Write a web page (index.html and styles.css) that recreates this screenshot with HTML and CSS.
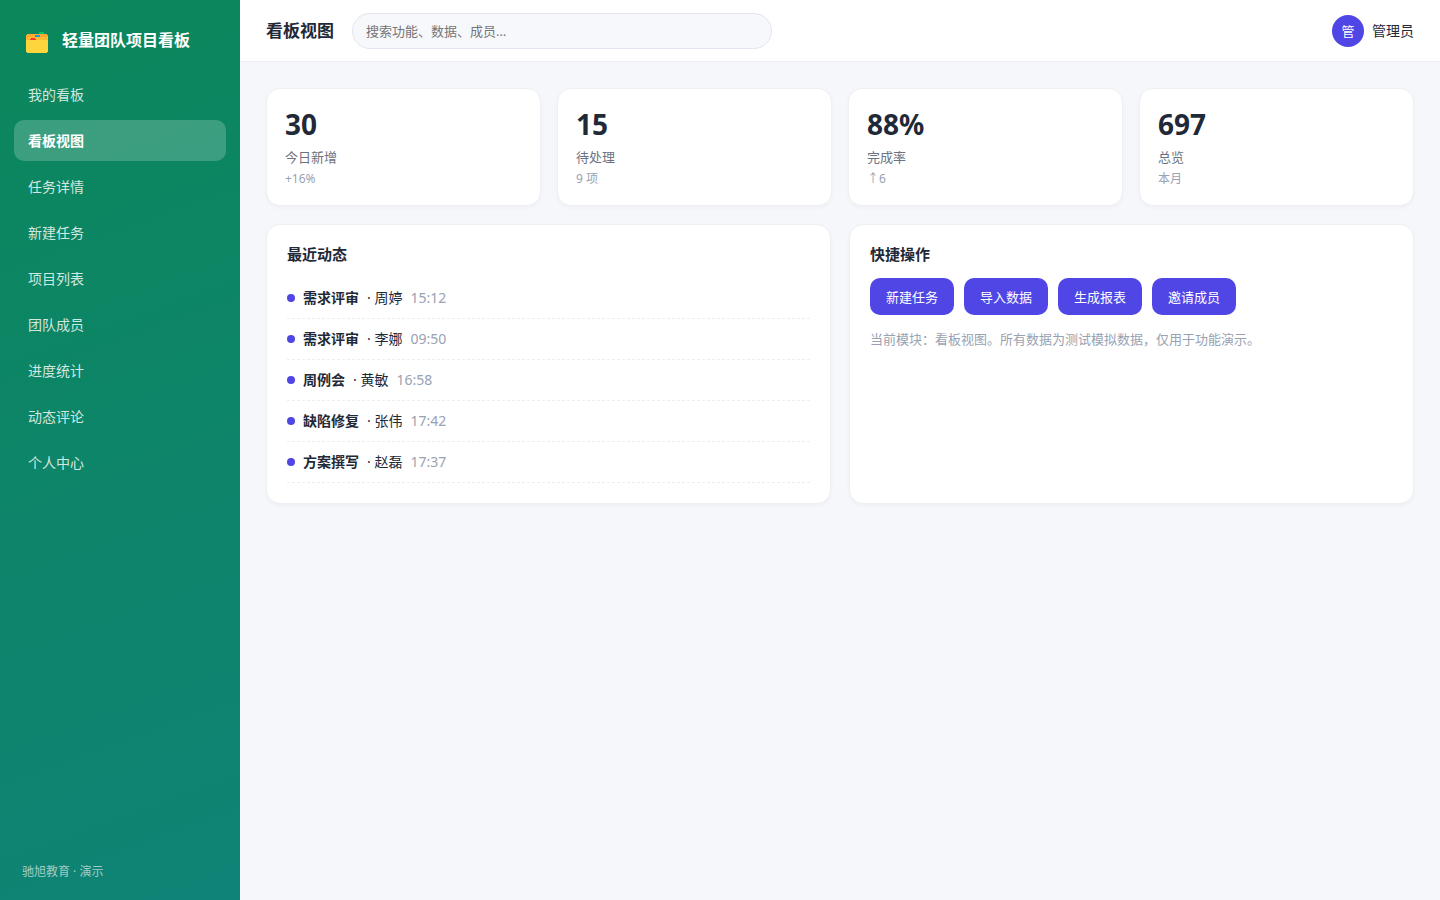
FILE: index.html
```html
<!DOCTYPE html>
<html lang="zh-CN">
<head>
<meta charset="utf-8">
<meta name="viewport" content="width=device-width, initial-scale=1">
<title>轻量团队项目看板</title>
<link rel="stylesheet" href="styles.css">
</head>
<body>
<div class="app">
  <aside class="sidebar">
    <div class="brand">
      <svg class="brand-icon" viewBox="0 0 22 22" shape-rendering="crispEdges" aria-hidden="true">
        <rect x="13" y="0" width="5" height="3" fill="#00c36b"/>
        <path d="M1 2h20v1h1v6H0V3h1z" fill="#ffa92e"/>
        <rect x="13" y="0" width="5" height="2" fill="#00c36b"/>
        <path d="M0 5h22v4H0z" fill="#fdbb33"/>
        <rect x="9" y="3" width="5" height="2" fill="#1c9be6"/>
        <path d="M0 8h22v12h-1v1H1v-1H0z" fill="#fed53c"/>
        <path d="M4 8V7h1V6h4v1h1v1z" fill="#f5362c"/>
      </svg>
      <span class="brand-name">轻量团队项目看板</span>
    </div>
    <nav class="nav">
      <a href="#">我的看板</a>
      <a href="#" class="active" aria-current="page">看板视图</a>
      <a href="#">任务详情</a>
      <a href="#">新建任务</a>
      <a href="#">项目列表</a>
      <a href="#">团队成员</a>
      <a href="#">进度统计</a>
      <a href="#">动态评论</a>
      <a href="#">个人中心</a>
    </nav>
    <div class="sidebar-foot">驰旭教育 · 演示</div>
  </aside>
  <div class="main">
    <header class="topbar">
      <h1>看板视图</h1>
      <input class="search" type="search" aria-label="搜索" placeholder="搜索功能、数据、成员…">
      <div class="user"><span class="avatar">管</span><span>管理员</span></div>
    </header>
    <main class="content">
      <section class="stats">
        <div class="card stat"><div class="num">30</div><div class="label">今日新增</div><div class="sub">+16%</div></div>
        <div class="card stat"><div class="num">15</div><div class="label">待处理</div><div class="sub">9 项</div></div>
        <div class="card stat"><div class="num">88%</div><div class="label">完成率</div><div class="sub">↑6</div></div>
        <div class="card stat"><div class="num">697</div><div class="label">总览</div><div class="sub">本月</div></div>
      </section>
      <section class="panels">
        <div class="card panel">
          <h2>最近动态</h2>
          <ul class="feed">
            <li><i class="dot"></i><b>需求评审</b><span>· 周婷</span><time>15:12</time></li>
            <li><i class="dot"></i><b>需求评审</b><span>· 李娜</span><time>09:50</time></li>
            <li><i class="dot"></i><b>周例会</b><span>· 黄敏</span><time>16:58</time></li>
            <li><i class="dot"></i><b>缺陷修复</b><span>· 张伟</span><time>17:42</time></li>
            <li><i class="dot"></i><b>方案撰写</b><span>· 赵磊</span><time>17:37</time></li>
          </ul>
        </div>
        <div class="card panel">
          <h2>快捷操作</h2>
          <div class="actions">
            <button type="button">新建任务</button>
            <button type="button">导入数据</button>
            <button type="button">生成报表</button>
            <button type="button">邀请成员</button>
          </div>
          <p class="note">当前模块：看板视图。所有数据为测试模拟数据，仅用于功能演示。</p>
        </div>
      </section>
    </main>
  </div>
</div>
</body>
</html>
```
FILE: styles.css
```css
* { box-sizing: border-box; }

body {
  margin: 0;
  background: #f5f7fb;
  color: #1f2937;
  font-family: "Noto Sans", "Noto Sans CJK SC", sans-serif;
  font-size: 14px;
  line-height: 20px;
}

h1, h2, p, ul { margin: 0; padding: 0; }

.app { display: flex; min-height: 100vh; }

.sidebar {
  flex: none;
  display: flex;
  flex-direction: column;
  width: 240px;
  padding: 22px 14px 18px;
  background: linear-gradient(160deg, #0b875b, #0f8376);
  color: #fff;
}

.brand {
  display: flex;
  align-items: center;
  gap: 14px;
  height: 36px;
  padding: 0 12px;
}
.brand-icon { width: 22px; height: 22px; margin-top: 6px; }
.brand-name { font-size: 16px; font-weight: 600; }

.nav { display: flex; flex-direction: column; gap: 5px; margin-top: 16px; }
.nav a {
  padding: 11px 14px 10px;
  border-radius: 10px;
  color: rgba(255, 255, 255, 0.82);
  text-decoration: none;
}
.nav a.active {
  background: rgba(255, 255, 255, 0.2);
  color: #fff;
  font-weight: 600;
}

.sidebar-foot {
  margin-top: auto;
  padding: 0 8px;
  font-size: 12px;
  color: rgba(255, 255, 255, 0.6);
}

.main { flex: 1; min-width: 0; }

.topbar {
  display: flex;
  align-items: center;
  gap: 18px;
  height: 62px;
  padding: 0 26px;
  background: #fff;
  border-bottom: 1px solid #eceef3;
}
.topbar h1 { font-size: 17px; font-weight: 700; }

.search {
  flex: 0 1 420px;
  min-width: 0;
  height: 36px;
  padding: 0 13px;
  border: 1px solid #e3e5ef;
  border-radius: 18px;
  background: #f7f8fc;
  color: inherit;
  font: inherit;
  font-size: 13px;
  appearance: none;
}
.search::placeholder { color: #757575; }

.user { display: flex; align-items: center; gap: 8px; margin-left: auto; }
.avatar {
  width: 32px;
  height: 32px;
  border-radius: 50%;
  background: #4f46e5;
  color: #fff;
  font-size: 13px;
  line-height: 32px;
  text-align: center;
}

.content { padding: 26px; }

.card {
  background: #fff;
  border: 1px solid #eef0f4;
  border-radius: 14px;
  box-shadow: 0 2px 4px rgba(31, 41, 55, 0.03);
}

.stats {
  display: grid;
  grid-template-columns: repeat(4, 1fr);
  gap: 16px;
  margin-bottom: 18px;
}
.stat { padding: 18px; }
.num { font-size: 28px; font-weight: 700; line-height: 34px; }
.label { margin-top: 6px; font-size: 13px; color: #6b7280; }
.sub { margin-top: 4px; font-size: 12px; line-height: 16px; color: #98a2b3; }

.panels { display: grid; grid-template-columns: 1fr 1fr; gap: 18px; }
.panel { padding: 20px; }
.panel h2 { margin-bottom: 15px; font-size: 15px; font-weight: 600; line-height: 18px; }

.feed { list-style: none; }
.feed li {
  display: flex;
  align-items: center;
  gap: 8px;
  padding: 10px 0;
  border-bottom: 1px dashed #eceef3;
}
.feed b { font-weight: 600; }
.feed time { color: #98a2b3; }
.dot { width: 8px; height: 8px; border-radius: 50%; background: #4f46e5; }

.actions { display: flex; flex-wrap: wrap; gap: 10px; }
.actions button {
  height: 37px;
  padding: 0 16px;
  border: 0;
  border-radius: 10px;
  background: #4f46e5;
  color: #fff;
  font: inherit;
  font-size: 13px;
}
.note { margin-top: 14px; font-size: 13px; color: #98a2b3; }
```
